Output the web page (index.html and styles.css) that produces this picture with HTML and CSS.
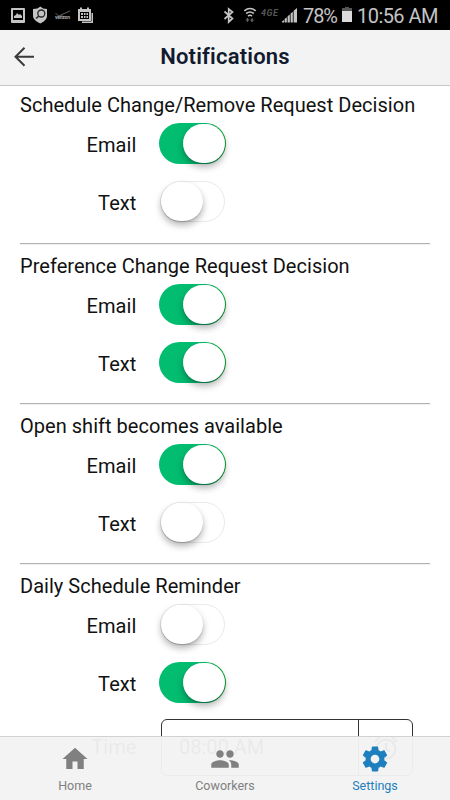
FILE: index.html
```html
<!DOCTYPE html>
<html lang="en">
<head>
<meta charset="utf-8">
<title>Notifications</title>
<link rel="stylesheet" href="styles.css">
</head>
<body>
<div class="screen">
  <div class="status">
    <svg class="status-left" width="100" height="30" viewBox="0 0 100 30">
      <path fill="#c4c4c4" fill-rule="evenodd" d="M12 8h12q1 0 1 1v13q0 1-1 1H12q-1 0-1-1V9q0-1 1-1zm1 2v10h10V10z"/>
      <path fill="#c4c4c4" d="M14 18v-2l2-1 1-2 2 2 1-1 2 2v2z"/>
      <path fill="#c4c4c4" d="M40.300 6.500 43 8.500l4 .5v7c0 3-3 6-6.700 7.500C36.500 22 33 19 33 16V9l4.500-.5z"/>
      <circle cx="41.300" cy="13.500" r="3.500" fill="none" stroke="#222" stroke-width="1.300"/>
      <path stroke="#222" stroke-width="1.500" d="m39 16-3 2.500"/>
      <path fill="none" stroke="#777" stroke-width=".8" d="m55.500 13 3 3L70 11"/>
      <text class="carrier" x="55" y="19.200" textLength="15">verizon</text>
      <path fill="#c4c4c4" fill-rule="evenodd" d="M78 9h2V7.500h2V9h5V7.500h2V9h2v12H78zm2 3v7h9v-7z"/>
      <path fill="#c4c4c4" d="M81 13h2v2h-2zm3 0h1.500v2H84zm2.500 0H88v2h-1.500zM81 16h2v2h-2zm3 0h1.500v2H84zm2.500 0H88v2h-1.500zM91.500 13H93v10H82v-1.500h9.500z"/>
    </svg>
    <div class="status-right">
      <svg width="78" height="30" viewBox="221 0 78 30">
        <path fill="none" stroke="#c4c4c4" stroke-width="1.700" d="m224.500 11.500 8 7-3.800 3.500V9l3.800 3-8 7"/>
        <path fill="none" stroke="#c4c4c4" stroke-width="1.600" d="M244.300 10.800q5.700-4.500 11.400 0M246.200 13.500q3.800-3 7.600 0M248 16q2-1.400 4 0"/>
        <path fill="#666" d="m247.500 22-2-2.500h1.300V18h1.400v1.500h1.300zM252 18l2 2.500h-1.300V22h-1.400v-1.500H250z"/>
        <text class="lte" x="261" y="16" textLength="17">4GE</text>
        <path fill="#c4c4c4" d="M282 22.500h2V20l-2 1.500zm2.600 0h2.200v-5.200l-2.200 1.700zm3 0h2.200v-8l-2.200 1.700zm3 0h2.200V11.700l-2.200 1.700zm3 0h3.400V8l-3.400 2.700z"/>
      </svg>
      <span class="pct">78%</span>
      <svg class="battery" width="10" height="16" viewBox="0 0 10 16"><path fill="#555" d="M3 0h4v1h3v3H0V1h3z"/><path fill="#dcdcdc" d="M0 4h10v11H0z"/></svg>
      <span class="clock">10:56 AM</span>
    </div>
  </div>

  <header class="bar">
    <svg class="back" width="21" height="20" viewBox="0 0 21 20"><path fill="none" stroke="#3b3b3b" stroke-width="2" d="M10.500.8 1.500 9.700l9 9M1.500 9.700H20"/></svg>
    <h1>Notifications</h1>
  </header>

  <main>
    <section>
      <h2>Schedule Change/Remove Request Decision</h2>
      <div class="row"><span class="label">Email</span><span class="toggle on"><i></i></span></div>
      <div class="row"><span class="label">Text</span><span class="toggle"><i></i></span></div>
    </section>
    <section>
      <h2>Preference Change Request Decision</h2>
      <div class="row"><span class="label">Email</span><span class="toggle on"><i></i></span></div>
      <div class="row"><span class="label">Text</span><span class="toggle on"><i></i></span></div>
    </section>
    <section>
      <h2>Open shift becomes available</h2>
      <div class="row"><span class="label">Email</span><span class="toggle on"><i></i></span></div>
      <div class="row"><span class="label">Text</span><span class="toggle"><i></i></span></div>
    </section>
    <section class="last">
      <h2>Daily Schedule Reminder</h2>
      <div class="row"><span class="label">Email</span><span class="toggle"><i></i></span></div>
      <div class="row"><span class="label">Text</span><span class="toggle on"><i></i></span></div>
      <div class="row time"><span class="label">Time</span>
        <div class="field"><span class="value">08:00 AM</span><span class="alarm">
          <svg width="26" height="26" viewBox="0 0 26 26" fill="none" stroke="#111" stroke-width="2"><circle cx="13" cy="14" r="9.500"/><path d="M13 8v6l4 3M2 7l5-5M24 7l-5-5"/></svg>
        </span></div>
      </div>
    </section>
  </main>

  <nav class="tabs">
    <div class="tab">
      <svg width="30" height="30" viewBox="0 0 24 24"><path fill="currentColor" d="M10 20v-6h4v6h5v-8h3L12 3 2 12h3v8z"/></svg>
      <span>Home</span>
    </div>
    <div class="tab">
      <svg width="30" height="30" viewBox="0 0 24 24"><path fill="currentColor" d="M16 11c1.660 0 2.990-1.340 2.990-3S17.660 5 16 5c-1.660 0-3 1.340-3 3s1.340 3 3 3zm-8 0c1.660 0 2.990-1.340 2.990-3S9.660 5 8 5C6.340 5 5 6.340 5 8s1.340 3 3 3zm0 2c-2.330 0-7 1.170-7 3.500V19h14v-2.500c0-2.330-4.670-3.500-7-3.500zm8 0c-.29 0-.62.020-.97.050 1.160.840 1.970 1.970 1.970 3.450V19h6v-2.500c0-2.330-4.670-3.500-7-3.500z"/></svg>
      <span>Coworkers</span>
    </div>
    <div class="tab active">
      <svg width="30" height="30" viewBox="0 0 24 24"><path fill="currentColor" d="M19.430 12.980c.04-.32.070-.64.070-.98s-.03-.66-.07-.98l2.110-1.650c.19-.15.240-.42.120-.64l-2-3.460c-.12-.22-.39-.3-.61-.22l-2.490 1c-.52-.4-1.080-.73-1.690-.98l-.38-2.650C14.460 2.180 14.250 2 14 2h-4c-.25 0-.46.180-.49.420l-.38 2.650c-.61.250-1.170.59-1.690.98l-2.490-1c-.23-.09-.49 0-.61.220l-2 3.460c-.13.220-.07.490.120.640l2.110 1.650c-.04.320-.07.650-.07.980s.03.660.070.980l-2.110 1.650c-.19.150-.24.420-.12.640l2 3.460c.12.220.39.300.610.220l2.490-1c.52.400 1.080.730 1.690.980l.38 2.650c.03.240.240.420.490.420h4c.25 0 .46-.18.490-.42l.38-2.650c.61-.25 1.170-.59 1.690-.98l2.490 1c.23.090.490 0 .61-.22l2-3.460c.12-.22.070-.49-.12-.64zM12 15.500c-1.930 0-3.500-1.570-3.500-3.500s1.570-3.500 3.500-3.500 3.500 1.570 3.500 3.500-1.570 3.500-3.500 3.500z"/></svg>
      <span>Settings</span>
    </div>
  </nav>
</div>
</body>
</html>
```

FILE: styles.css
```css
* { box-sizing: border-box; }
body {
  margin: 0;
  font-family: Roboto, "Liberation Sans", sans-serif;
  color: #111;
  background: #fff;
}
.screen {
  position: relative;
  height: 800px;
  overflow: hidden;
  display: flex;
  flex-direction: column;
}
.status {
  flex: none;
  display: flex;
  justify-content: space-between;
  height: 30px;
  background: #000;
  color: #c4c4c4;
  font-size: 20px;
  line-height: 32px;
}
.status-right {
  display: flex;
  width: 229px;
}
.status-right > svg { flex: none; }
.carrier { font-size: 5px; font-weight: 700; fill: #aaa; }
.lte { font-size: 9px; font-style: italic; font-weight: 700; fill: #555; }
.pct { flex: none; width: 43px; padding-left: 4px; letter-spacing: -1.1px; }
.battery { margin: 7px 0 0 0; }
.clock { padding-left: 5px; white-space: nowrap; letter-spacing: -.55px; }
.bar {
  flex: none;
  display: grid;
  grid-template-columns: 50px 1fr 50px;
  height: 56px;
  background: #f3f3f3;
  border-bottom: 1px solid #c8c8c8;
}
.back { margin: 17px 0 0 14px; }
h1 {
  margin: 0;
  text-align: center;
  font-size: 22px;
  letter-spacing: .2px;
  line-height: 53px;
  font-weight: 600;
  color: #111a2e;
}
main { padding: 0 20px; }
section {
  height: 160px;
  padding-top: 7px;
  border-bottom: 1px solid #b2b2b2;
  box-shadow: 0 1px 0 #f1f1f1;
}
section:first-child { height: 158px; padding-top: 4px; }
section.last { height: auto; border: 0; }
h2 {
  margin: 0;
  height: 33px;
  font-size: 20px;
  letter-spacing: .03px;
  line-height: 30px;
  font-weight: 400;
  white-space: nowrap;
}
.row {
  display: grid;
  grid-template-columns: 117px 1fr;
  column-gap: 22px;
  height: 58px;
  font-size: 20px;
}
.label { text-align: right; line-height: 44px; letter-spacing: .1px; padding-right: .5px; }
.toggle {
  width: 67px;
  height: 41px;
  border-radius: 21px;
  padding: 1px;
  display: flex;
}
.toggle:not(.on) {
  margin-left: 1px;
  width: 65px;
  border: 1px solid #e9e9ee;
  padding: 0;
}
.toggle.on {
  justify-content: flex-end;
  background: linear-gradient(90deg, #02bd70 65%, #00a52a);
}
.toggle i {
  width: 42px;
  height: 39px;
  border-radius: 20px;
  background: #fff;
  box-shadow: 0 4px 7px rgba(0,0,0,.3), 0 1px 1px rgba(0,0,0,.16);
}
.time .label { line-height: 54px; }
.field {
  display: flex;
  width: 252px;
  height: 57px;
  margin: -1px 0 0 2px;
  border: 1px solid #333;
  border-radius: 6px;
}
.value { flex: 1; padding-left: 17px; line-height: 54px; }
.alarm { width: 54px; border-left: 1px solid #333; display: flex; justify-content: center; align-items: center; }
.tabs {
  position: absolute;
  inset: auto 0 0;
  display: grid;
  grid-template-columns: repeat(3, 150px);
  height: 64px;
  background: rgba(243,243,243,.96);
  border-top: 1px solid #d2d2d2;
}
.tab {
  display: flex;
  flex-direction: column;
  align-items: center;
  padding-top: 7px;
  color: #808080;
  font-size: 12.5px;
  line-height: 24px;
}
.tab.active { color: #1d7fbd; }
```
